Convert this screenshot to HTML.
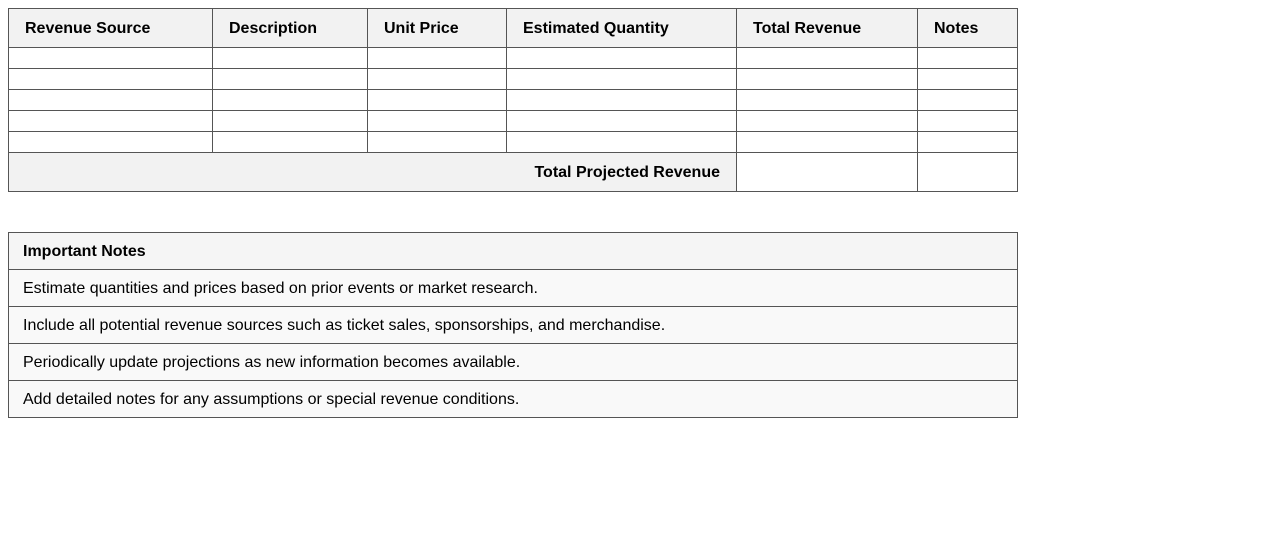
<!DOCTYPE html>
<html><head><style>
body{margin:0;padding:8px;background:#fff;font-family:"Liberation Sans",Arial,sans-serif;font-size:16px;color:#000}
table{border-collapse:collapse;table-layout:fixed}
td,th{border:1px solid #555;padding:0 16px;text-align:left}
.t1 th{height:37px;background:#f2f2f2;font-weight:bold;padding-top:1px}
.t1 td{height:20px}
.t1 .f td{height:38px}
.t1 .f td.l{height:37px;background:#f2f2f2;text-align:right;font-weight:bold;padding-top:1px}
.t2{margin-top:40px;width:1010px}
.t2 td{height:35px;padding:1px 14px 0;background:#f9f9f9}
.t2 .h td{font-weight:bold;background:#f5f5f5}
</style></head><body>
<table class="t1" style="width:1009px">
<colgroup><col style="width:204px"><col style="width:155px"><col style="width:139px"><col style="width:230px"><col style="width:181px"><col style="width:100px"></colgroup>
<tr><th>Revenue Source</th><th>Description</th><th>Unit Price</th><th>Estimated Quantity</th><th>Total Revenue</th><th>Notes</th></tr>
<tr><td></td><td></td><td></td><td></td><td></td><td></td></tr>
<tr><td></td><td></td><td></td><td></td><td></td><td></td></tr>
<tr><td></td><td></td><td></td><td></td><td></td><td></td></tr>
<tr><td></td><td></td><td></td><td></td><td></td><td></td></tr>
<tr><td></td><td></td><td></td><td></td><td></td><td></td></tr>
<tr class="f"><td class="l" colspan="4">Total Projected Revenue</td><td></td><td></td></tr>
</table>
<table class="t2">
<tr class="h"><td>Important Notes</td></tr>
<tr><td>Estimate quantities and prices based on prior events or market research.</td></tr>
<tr><td>Include all potential revenue sources such as ticket sales, sponsorships, and merchandise.</td></tr>
<tr><td>Periodically update projections as new information becomes available.</td></tr>
<tr><td>Add detailed notes for any assumptions or special revenue conditions.</td></tr>
</table>
</body></html>
